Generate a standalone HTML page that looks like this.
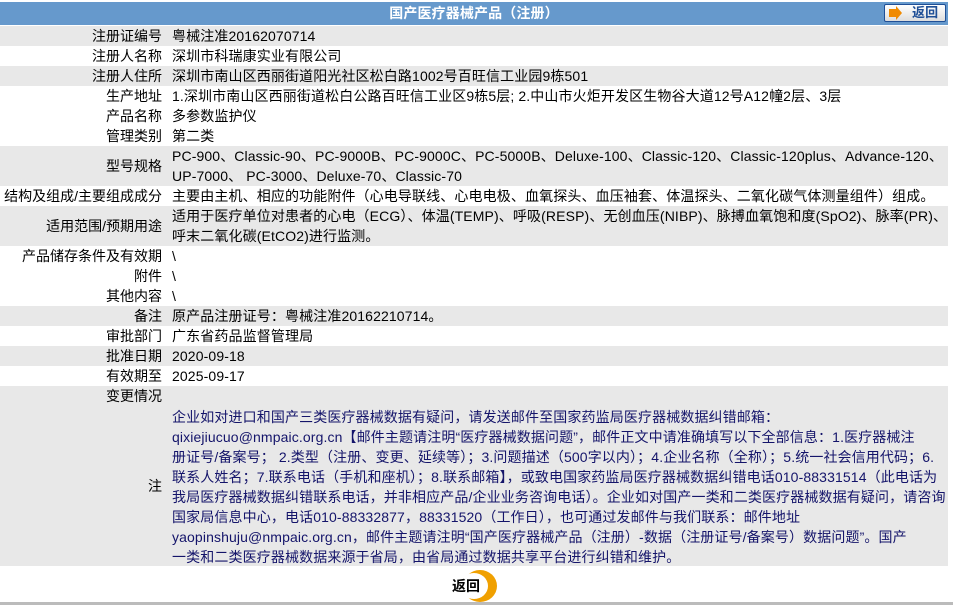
<!DOCTYPE html>
<html><head><meta charset="utf-8"><style>
body{margin:0;background:#fff;font-family:"Liberation Sans","Noto Sans CJK SC",sans-serif;font-size:14px;letter-spacing:0.12px;color:#000;}
.wrap{position:relative;width:953px;height:605px;overflow:hidden;}
.hd{position:absolute;left:0;top:2px;width:948px;height:23px;background:#6699cc;color:#fff;font-weight:bold;text-align:center;line-height:23px;font-size:14px;}
.btn{position:absolute;left:884px;top:4px;width:60px;height:16px;border:1px solid #1f4f96;border-radius:2px;background:linear-gradient(#fff,#ddd);}
.btn .ar{position:absolute;left:4px;top:4px;width:7px;height:8px;background:#f08a00;}
.btn .ar:after{content:"";position:absolute;left:7px;top:-3px;border-left:6px solid #f08a00;border-top:7px solid transparent;border-bottom:7px solid transparent;}
.btn span{position:absolute;left:27px;top:-1px;font-weight:bold;color:#1f4f96;font-size:13px;line-height:18px;}
.r{position:absolute;left:0;width:948px;}
.g{background:#e8e8e8;}
.l{position:absolute;right:786px;white-space:nowrap;letter-spacing:0;}
.v{position:absolute;left:172px;white-space:nowrap;line-height:20px;}
.r .l{top:50%;transform:translateY(-50%);}
.nt{color:#14146a;}
</style></head><body><div class="wrap">
<div class="hd">国产医疗器械产品（注册）</div>
<div class="btn"><div class="ar"></div><span>返回</span></div>

<div class="r g" style="top:26px;height:20px"><div class="l">注册证编号</div><div class="v" style="top:0">粤械注准20162070714</div></div>
<div class="r" style="top:46px;height:20px"><div class="l">注册人名称</div><div class="v" style="top:0">深圳市科瑞康实业有限公司</div></div>
<div class="r g" style="top:66px;height:20px"><div class="l">注册人住所</div><div class="v" style="top:0">深圳市南山区西丽街道阳光社区松白路1002号百旺信工业园9栋501</div></div>
<div class="r" style="top:86px;height:20px"><div class="l">生产地址</div><div class="v" style="top:0">1.深圳市南山区西丽街道松白公路百旺信工业区9栋5层; 2.中山市火炬开发区生物谷大道12号A12幢2层、3层</div></div>
<div class="r" style="top:106px;height:20px"><div class="l">产品名称</div><div class="v" style="top:0">多参数监护仪</div></div>
<div class="r" style="top:126px;height:20px"><div class="l">管理类别</div><div class="v" style="top:0">第二类</div></div>
<div class="r g" style="top:146px;height:40px"><div class="l">型号规格</div><div class="v" style="top:0">PC-900、Classic-90、PC-9000B、PC-9000C、PC-5000B、Deluxe-100、Classic-120、Classic-120plus、Advance-120、<br>UP-7000、 PC-3000、Deluxe-70、Classic-70</div></div>
<div class="r" style="top:186px;height:20px"><div class="l">结构及组成/主要组成成分</div><div class="v" style="top:0">主要由主机、相应的功能附件（心电导联线、心电电极、血氧探头、血压袖套、体温探头、二氧化碳气体测量组件）组成。</div></div>
<div class="r g" style="top:206px;height:40px"><div class="l">适用范围/预期用途</div><div class="v" style="top:0">适用于医疗单位对患者的心电（ECG）、体温(TEMP)、呼吸(RESP)、无创血压(NIBP)、脉搏血氧饱和度(SpO2)、脉率(PR)、<br>呼末二氧化碳(EtCO2)进行监测。</div></div>
<div class="r" style="top:246px;height:20px"><div class="l">产品储存条件及有效期</div><div class="v" style="top:0">\</div></div>
<div class="r" style="top:266px;height:20px"><div class="l">附件</div><div class="v" style="top:0">\</div></div>
<div class="r" style="top:286px;height:20px"><div class="l">其他内容</div><div class="v" style="top:0">\</div></div>
<div class="r g" style="top:306px;height:20px"><div class="l">备注</div><div class="v" style="top:0">原产品注册证号：粤械注准20162210714。</div></div>
<div class="r" style="top:326px;height:20px"><div class="l">审批部门</div><div class="v" style="top:0">广东省药品监督管理局</div></div>
<div class="r g" style="top:346px;height:20px"><div class="l">批准日期</div><div class="v" style="top:0">2020-09-18</div></div>
<div class="r" style="top:366px;height:20px"><div class="l">有效期至</div><div class="v" style="top:0">2025-09-17</div></div>
<div class="r g" style="top:386px;height:20px"><div class="l">变更情况</div></div>
<div class="r g" style="top:406px;height:160px"><div class="l">注</div><div class="v nt" style="top:1px">企业如对进口和国产三类医疗器械数据有疑问，请发送邮件至国家药监局医疗器械数据纠错邮箱：<br>qixiejiucuo@nmpaic.org.cn【邮件主题请注明“医疗器械数据问题”，邮件正文中请准确填写以下全部信息：1.医疗器械注<br>册证号/备案号； 2.类型（注册、变更、延续等）；3.问题描述（500字以内）；4.企业名称（全称）；5.统一社会信用代码；6.<br>联系人姓名；7.联系电话（手机和座机）；8.联系邮箱】，或致电国家药监局医疗器械数据纠错电话010-88331514（此电话为<br>我局医疗器械数据纠错联系电话，并非相应产品/企业业务咨询电话）。企业如对国产一类和二类医疗器械数据有疑问，请咨询<br>国家局信息中心，电话010-88332877，88331520（工作日），也可通过发邮件与我们联系：邮件地址<br>yaopinshuju@nmpaic.org.cn，邮件主题请注明“国产医疗器械产品（注册）-数据（注册证号/备案号）数据问题”。国产<br>一类和二类医疗器械数据来源于省局，由省局通过数据共享平台进行纠错和维护。</div></div>

<div style="position:absolute;left:463px;top:570px;width:34px;height:32px;border-radius:50%;background:#f0a000;"></div>
<div style="position:absolute;left:460px;top:573px;width:28px;height:26px;border-radius:50%;background:#fff;"></div>
<div style="position:absolute;left:452px;top:576px;font-weight:bold;font-size:14px;letter-spacing:0;">返回</div>
<div style="position:absolute;left:0;top:602px;width:953px;height:3px;background:#bbb;"></div>
</div></body></html>
